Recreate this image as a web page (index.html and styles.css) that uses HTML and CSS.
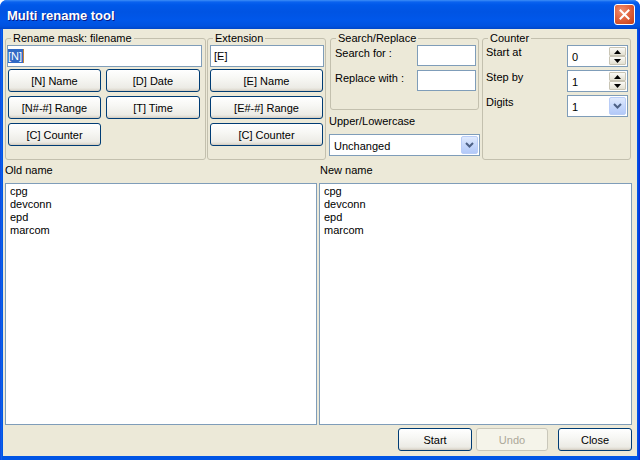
FILE: index.html
```html
<!DOCTYPE html>
<html>
<head>
<meta charset="utf-8">
<link rel="stylesheet" href="styles.css">
</head>
<body>
<div class="window">
  <div class="titlebar">
    <span class="title">Multi rename tool</span>
    <span class="close"><svg width="11" height="11" viewBox="0 0 11 11"><path d="M1.5 1.5 L9.5 9.5 M9.5 1.5 L1.5 9.5" stroke="#fff" stroke-width="2" stroke-linecap="square" fill="none"/></svg></span>
  </div>
  <div class="client">
    <div class="top">
      <fieldset class="group g-mask">
        <legend>Rename mask: filename</legend>
        <div class="field mask-field"><span class="sel">[N]</span><span class="caret"></span></div>
        <div class="btngrid">
          <button class="btn">[N] Name</button>
          <button class="btn">[D] Date</button>
          <button class="btn">[N#-#] Range</button>
          <button class="btn">[T] Time</button>
          <button class="btn">[C] Counter</button>
        </div>
      </fieldset>
      <fieldset class="group g-ext">
        <legend>Extension</legend>
        <div class="field ext-field">[E]</div>
        <div class="btncol">
          <button class="btn">[E] Name</button>
          <button class="btn">[E#-#] Range</button>
          <button class="btn">[C] Counter</button>
        </div>
      </fieldset>
      <div class="mid">
        <fieldset class="group g-search">
          <legend>Search/Replace</legend>
          <div class="frow"><span class="flabel">Search for :</span><div class="field small"></div></div>
          <div class="frow"><span class="flabel">Replace with :</span><div class="field small"></div></div>
        </fieldset>
        <div class="caselabel">Upper/Lowercase</div>
        <div class="combo"><span class="combotext">Unchanged</span><span class="dropbtn"><svg width="9" height="6" viewBox="0 0 9 6"><path d="M1 1 L4.5 4.5 L8 1" stroke="#4d6185" stroke-width="2" fill="none"/></svg></span></div>
      </div>
      <fieldset class="group g-counter">
        <legend>Counter</legend>
        <div class="crow"><span class="clabel">Start at</span>
          <div class="spin"><span class="spintext">0</span>
            <span class="spinbtns">
              <span class="sb"><svg width="7" height="4" viewBox="0 0 7 4"><path d="M0 4 L3.5 0 L7 4 Z" fill="#000"/></svg></span>
              <span class="sb"><svg width="7" height="4" viewBox="0 0 7 4"><path d="M0 0 L3.5 4 L7 0 Z" fill="#000"/></svg></span>
            </span>
          </div>
        </div>
        <div class="crow"><span class="clabel">Step by</span>
          <div class="spin"><span class="spintext">1</span>
            <span class="spinbtns">
              <span class="sb"><svg width="7" height="4" viewBox="0 0 7 4"><path d="M0 4 L3.5 0 L7 4 Z" fill="#000"/></svg></span>
              <span class="sb"><svg width="7" height="4" viewBox="0 0 7 4"><path d="M0 0 L3.5 4 L7 0 Z" fill="#000"/></svg></span>
            </span>
          </div>
        </div>
        <div class="crow"><span class="clabel">Digits</span>
          <div class="spin"><span class="spintext">1</span>
            <span class="dropbtn"><svg width="9" height="6" viewBox="0 0 9 6"><path d="M1 1 L4.5 4.5 L8 1" stroke="#4d6185" stroke-width="2" fill="none"/></svg></span>
          </div>
        </div>
      </fieldset>
    </div>
    <div class="lists">
      <div class="col col-old">
        <div class="lbl">Old name</div>
        <div class="listbox">cpg<br>devconn<br>epd<br>marcom</div>
      </div>
      <div class="col col-new">
        <div class="lbl">New name</div>
        <div class="listbox">cpg<br>devconn<br>epd<br>marcom</div>
      </div>
    </div>
    <div class="actions">
      <button class="btn act act-start">Start</button>
      <button class="btn act act-undo disabled">Undo</button>
      <button class="btn act act-close">Close</button>
    </div>
  </div>
</div>
</body>
</html>
```
FILE: styles.css
```css
* { box-sizing: border-box; }
html, body { margin: 0; padding: 0; }
body {
  width: 640px; height: 460px; overflow: hidden;
  font-family: "Liberation Sans", Arial, sans-serif;
  font-size: 11px; color: #000;
}
.window {
  width: 640px; height: 460px;
  display: flex; flex-direction: column;
  background: linear-gradient(to right, #0831d9 0, #166aee 1px, #0055e5 2px, #0055e5 638px, #0831d9 639px);
  border-radius: 7px 7px 0 0;
}
.titlebar {
  height: 29px; flex: none;
  display: flex; align-items: center; justify-content: space-between;
  padding: 0 5px 0 7px;
  border-radius: 7px 7px 0 0;
  background: linear-gradient(to bottom, #3d8ef7 0, #0a62ef 2px, #0058e9 5px, #0054e3 12px, #0057ea 20px, #0052e0 26px, #0046c8 29px);
}
.title {
  font-family: "Liberation Sans", Arial, sans-serif;
  font-weight: bold; font-size: 13px; color: #fff;
  text-shadow: 1px 1px 0 #0a1883;
  margin-top: 1px;
}
.close {
  width: 21px; height: 21px;
  border: 1px solid #fff; border-radius: 3px;
  background: radial-gradient(circle at 35% 30%, #ef8f70 0, #e06440 45%, #c23c14 100%);
  display: flex; align-items: center; justify-content: center;
}
.client {
  flex: 1; margin: 0 3px 4px 3px;
  background: #ece9d8;
  padding: 3px 0 5px 0;
  display: flex; flex-direction: column;
}
.top { display: flex; height: 128px; flex: none; }
.group {
  margin: 0; padding: 0; min-width: 0;
  border: 1px solid #c3c0ae; border-radius: 3px;
}
.group legend {
  margin-left: 5px; padding: 0 2px;
  line-height: 13px; font-size: 11px;
}
.field {
  height: 22px; background: #fff; border: 1px solid #7f9db9;
  padding: 3px 0 0 2px; line-height: 14px;
}
.g-mask { width: 201px; margin-left: 2px; }
.mask-field { margin: 0 3px 0 1px; display: flex; align-items: flex-start; padding-left: 0; }
.sel { background: #316ac5; color: #fff; padding: 0 1px 0 0; line-height: 14px; }
.caret { width: 1px; height: 14px; background: #c0843a; }
.btngrid {
  display: grid; grid-template-columns: 93px 94px; grid-auto-rows: 23px;
  column-gap: 5px; row-gap: 4px; margin: 2px 0 0 2px;
}
.btn {
  font-family: "Liberation Sans", Arial, sans-serif; font-size: 11px; color: #000;
  border: 1px solid #003c74; border-radius: 3px; padding: 0;
  background: linear-gradient(to bottom, #ffffff 0, #f7f7f4 40%, #ecebe5 85%, #d8d2c6 100%);
  box-shadow: inset 0 -1px 0 #d6d0c5;
}
.g-ext { width: 119px; margin-left: 1px; }
.ext-field { margin: 0 1px 0 2px; padding-left: 3px; }
.btncol { display: flex; flex-direction: column; gap: 4px; margin: 2px 2px 0 2px; }
.btncol .btn { height: 23px; }
.mid { width: 151px; margin-left: 3px; display: flex; flex-direction: column; }
.g-search { margin: 0 1px; height: 78px; }
.frow { display: flex; justify-content: space-between; align-items: flex-start; margin: 0 2px 4px 4px; }
.flabel { padding-top: 2px; line-height: 13px; }
.field.small { width: 59px; height: 21px; }
.caselabel { margin-top: 5px; line-height: 13px; height: 13px; }
.combo {
  margin-top: 6px; height: 22px; background: #fff; border: 1px solid #7f9db9;
  display: flex; justify-content: space-between; align-items: stretch;
  padding: 1px;
}
.combotext { padding: 3px 0 0 3px; line-height: 14px; }
.dropbtn {
  width: 17px; border: 1px solid #b9cdf7; border-radius: 2px;
  background: linear-gradient(to bottom, #e0eafd 0, #c6d8fb 50%, #b3c9f8 100%);
  display: flex; align-items: center; justify-content: center;
}
.g-counter { width: 149px; margin-left: 2px; }
.crow { display: flex; justify-content: space-between; align-items: flex-start; margin: 0 2px 3px 3px; }
.clabel { padding-top: 1px; line-height: 13px; }
.spin {
  width: 61px; height: 22px; background: #fff; border: 1px solid #7f9db9;
  display: flex; justify-content: space-between; align-items: stretch; padding: 1px;
}
.spintext { padding: 3px 0 0 3px; line-height: 14px; }
.spinbtns { width: 17px; display: flex; flex-direction: column; }
.sb {
  flex: 1; display: flex; align-items: center; justify-content: center;
  background: linear-gradient(to bottom, #fbfaf6, #e3e0d2);
  border: 1px solid #c9c5b5;
  border-radius: 1px;
}
.lists { flex: 1; display: flex; min-height: 0; }
.col { display: flex; flex-direction: column; }
.col-old { width: 312px; margin-left: 2px; }
.col-new { width: 313px; margin-left: 2px; }
.lbl { height: 23px; padding: 4px 0 0 0; line-height: 13px; }
.col-new .lbl { padding-left: 1px; }
.listbox {
  flex: 1; background: #fff; border: 1px solid #7f9db9;
  padding: 1px 0 0 4px; line-height: 13px;
}
.actions { display: flex; justify-content: flex-end; margin-top: 3px; height: 23px; padding-right: 5px; }
.act { height: 23px; }
.act-start { width: 74px; }
.act-undo { width: 72px; margin-left: 4px; }
.act-close { width: 74px; margin-left: 10px; }
.act.disabled {
  color: #aca899; border-color: #c9c7ba;
  background: #f5f4ea; box-shadow: none;
}
```
